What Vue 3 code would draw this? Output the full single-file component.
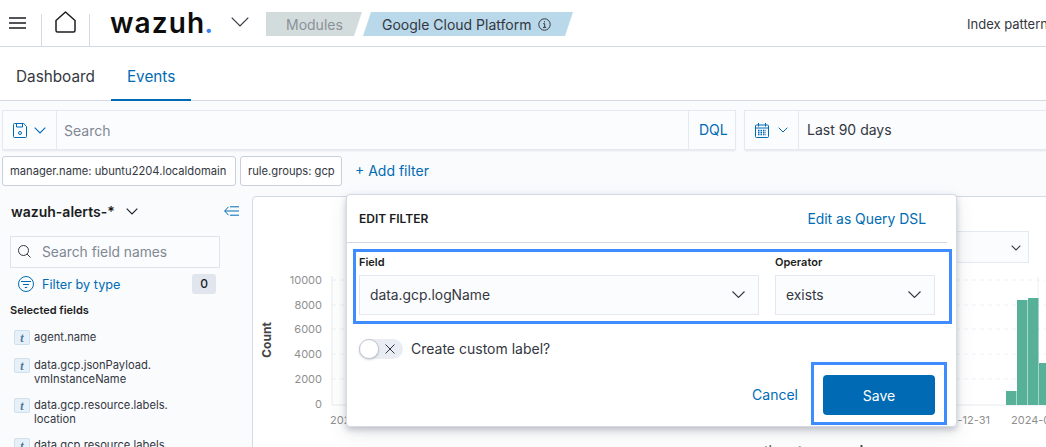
<template>
  <div class="page">
    <header class="topbar">
      <div class="menu-btn">
        <svg width="17" height="12" viewBox="0 0 17 12"><path d="M0 1h17M0 6h17M0 11h17" stroke="#1a1c21" stroke-width="1.7" /></svg>
      </div>
      <div class="home-btn">
        <svg width="21" height="22" viewBox="0 0 21 22" fill="none"><path d="M1 9.5 10.5 1 20 9.5V19.5a1.5 1.5 0 0 1-1.5 1.5h-16A1.5 1.5 0 0 1 1 19.500Z" stroke="#1a1c21" stroke-width="1.5" stroke-linejoin="round" /></svg>
      </div>
      <div class="logo">wazuh<span class="logo-dot">.</span></div>
      <svg class="logo-chevron" width="18" height="10" viewBox="0 0 18 10" fill="none"><path d="M.7.7 9 9l8.300-8.300" stroke="#343741" stroke-width="1.200" /></svg>
      <div class="crumb crumb-grey"><span>Modules</span></div>
      <div class="crumb crumb-blue">
        <span>Google Cloud Platform</span>
        <svg width="13" height="13" viewBox="0 0 13 13" fill="none"><circle cx="6.500" cy="6.500" r="5.700" stroke="#343741" /><path d="M5.200 5.700h1.500v3.500M5 9.400h3.200M6.500 3.200v1.200" stroke="#343741" /></svg>
      </div>
      <div class="index-pattern">Index pattern</div>
    </header>

    <nav class="tabs">
      <div class="tab">Dashboard</div>
      <div class="tab active">Events</div>
    </nav>

    <section class="query-row">
      <div class="search-bar">
        <div class="save-cell">
          <svg width="14" height="15" viewBox="0 0 14 15" fill="none" stroke="#006bb4"><path d="M.5 1.500a1 1 0 0 1 1-1h9.200l2.800 2.800v10.200a1 1 0 0 1-1 1h-11a1 1 0 0 1-1-1Z" /><path d="M3.500.5v3.500h6V.5" /><circle cx="7" cy="10" r="1.500" /></svg>
          <svg width="12" height="7" viewBox="0 0 12 7" fill="none"><path d="M.7.7 6 6l5.300-5.300" stroke="#006bb4" stroke-width="1.100" /></svg>
        </div>
        <div class="search-text">Search</div>
        <div class="dql">DQL</div>
      </div>
      <div class="date-bar">
        <div class="date-cell">
          <svg width="14" height="15" viewBox="0 0 14 15" fill="none" stroke="#006bb4"><rect x=".5" y="2" width="13" height="12.500" rx="1" /><path d="M3.500 0v3.500M10.500 0v3.500M.5 5h13" /><path d="M3 7.500h8M3 9.500h8M3 11.500h8" stroke-dasharray="1.500 1" stroke-width="1.300" /></svg>
          <svg width="10" height="6" viewBox="0 0 10 6" fill="none"><path d="M.7.7 5 5 9.300.7" stroke="#006bb4" /></svg>
        </div>
        <div class="date-text">Last 90 days</div>
      </div>
    </section>

    <section class="filter-row">
      <div class="pill pill-wide">manager.name: ubuntu2204.localdomain</div>
      <div class="pill pill-narrow">rule.groups: gcp</div>
      <div class="add-filter">+ Add filter</div>
    </section>

    <main class="content">
      <aside class="sidebar">
        <div class="index-row">
          <span class="index-name">wazuh-alerts-*</span>
          <svg width="12" height="7" viewBox="0 0 12 7" fill="none"><path d="M.7.7 6 6l5.300-5.300" stroke="#1a1c21" stroke-width="1.100" /></svg>
          <svg class="collapse" width="15" height="10" viewBox="0 0 15 10" fill="none" stroke="#006bb4"><path d="M4.500.8.700 5l3.800 4.200M.7 5H15M6 .8h9M6 9.200h9" /></svg>
        </div>
        <div class="field-search">
          <svg width="13" height="13" viewBox="0 0 13 13" fill="none" stroke="#343741"><circle cx="5.500" cy="5.500" r="5" /><path d="m9 9 3.500 3.500" /></svg>
          <span>Search field names</span>
        </div>
        <div class="type-row">
          <svg width="16" height="16" viewBox="0 0 16 16" fill="none" stroke="#006bb4"><circle cx="8" cy="8" r="7.500" /><path d="M3 5.500h10M5 8.500h6M6.800 11.500h2.400" /></svg>
          <span class="type-label">Filter by type</span>
          <span class="badge">0</span>
        </div>
        <div class="selected-title">Selected fields</div>
        <div class="field-list">
          <div v-for="f in fields" :key="f.join()" class="field-row">
            <span class="field-type">t</span>
            <span class="field-name"><span v-for="line in f" :key="line" class="field-line">{{ line }}</span></span>
          </div>
        </div>
      </aside>

      <div class="chart-panel">
        <svg class="chart" width="794" height="251" viewBox="252 196 794 251">
          <g stroke="#eef0f3" stroke-dasharray="4 4">
            <path d="M332 280H1046M332 305H1046M332 329H1046M332 354H1046M332 379H1046" />
          </g>
          <path d="M332 276V405H1046" fill="none" stroke="#e8eaee" />
          <path d="M1038 276V405" stroke="#eef0f3" />
          <g fill="#8f8f8f" font-size="11" text-anchor="end">
            <text x="322" y="284">10000</text>
            <text x="322" y="309">8000</text>
            <text x="322" y="333">6000</text>
            <text x="322" y="358">4000</text>
            <text x="322" y="383">2000</text>
            <text x="322" y="408">0</text>
          </g>
          <text class="count" transform="translate(271 340) rotate(-90)" text-anchor="middle">Count</text>
          <text x="330" y="424" fill="#8f8f8f" font-size="11">2023</text>
          <text x="990" y="424" fill="#8f8f8f" font-size="11" text-anchor="end">2023-12-31</text>
          <text x="1011" y="424" fill="#8f8f8f" font-size="11">2024-01</text>
          <g fill="#57b199">
            <rect x="1006" y="391" width="10.500" height="14" />
            <rect x="1017" y="300" width="10.500" height="105" />
            <rect x="1028" y="298" width="10.500" height="107" />
            <rect x="1039" y="363" width="10.500" height="42" />
          </g>
          <text x="764" y="455" class="axis-title">timestamp per day</text>
        </svg>
        <div class="interval-select">
          <svg width="10" height="6" viewBox="0 0 10 6" fill="none"><path d="M.7.7 5 5 9.300.7" stroke="#343741" stroke-width="1.100" /></svg>
        </div>
      </div>
    </main>

    <div class="popover">
      <div class="pop-head">
        <span class="pop-title">EDIT FILTER</span>
        <span class="pop-link">Edit as Query DSL</span>
      </div>
      <div class="pop-body">
        <div class="form-grid">
          <div class="form-col field-col">
            <label>Field</label>
            <div class="select">
              <span>data.gcp.logName</span>
              <svg width="13" height="7" viewBox="0 0 13 7" fill="none"><path d="M.5.500 6.500 6.500 12.500.5" stroke="#343741" stroke-width="1.100" /></svg>
            </div>
          </div>
          <div class="form-col op-col">
            <label>Operator</label>
            <div class="select">
              <span>exists</span>
              <svg width="13" height="7" viewBox="0 0 13 7" fill="none"><path d="M.5.500 6.500 6.500 12.500.5" stroke="#343741" stroke-width="1.100" /></svg>
            </div>
          </div>
        </div>
        <div class="switch-row">
          <div class="switch">
            <span class="knob"></span>
            <svg width="10" height="10" viewBox="0 0 10 10" fill="none"><path d="m.5.500 9 9M9.500.5l-9 9" stroke="#343741" /></svg>
          </div>
          <span class="switch-label">Create custom label?</span>
        </div>
        <div class="actions">
          <span class="cancel">Cancel</span>
          <button class="save">Save</button>
        </div>
      </div>
      <div class="mark mark-form"></div>
      <div class="mark mark-save"></div>
    </div>
  </div>
</template>

<script setup>
const fields = [
  ["agent.name"],
  ["data.gcp.jsonPayload.", "vmInstanceName"],
  ["data.gcp.resource.labels.", "location"],
  ["data.gcp.resource.labels."],
]
</script>

<style>
html,
body {
  margin: 0;
  overflow: hidden;
}
</style>

<style scoped>
.page {
  position: relative;
  width: 1046px;
  height: 447px;
  overflow: hidden;
  background: #fafbfd;
  font-family: Inter, "Liberation Sans", sans-serif;
  color: #343741;
}
.topbar {
  display: flex;
  align-items: flex-start;
  height: 46px;
  background: #fff;
  border-bottom: 1px solid #d3dae6;
  white-space: nowrap;
}
.menu-btn {
  width: 41px;
  height: 46px;
  padding: 17px 0 0 9px;
  box-sizing: border-box;
}
.menu-btn svg {
  display: block;
}
.home-btn {
  width: 49px;
  height: 32px;
  margin-top: 14px;
  padding: 0 0 0 13px;
  box-sizing: border-box;
  border-left: 1px solid #d3dae6;
  border-right: 1px solid #d3dae6;
}
.home-btn svg {
  display: block;
  margin-top: -3px;
}
.logo {
  margin-left: 20px;
  width: 121px;
  font-size: 28px;
  font-weight: 600;
  line-height: 46px;
  height: 46px;
  letter-spacing: 1.1px;
  color: #0d0d0d;
}
.logo-dot {
  color: #3d82f1;
  margin-left: -1px;
}
.logo-chevron {
  margin-top: 17px;
}
.crumb {
  height: 24px;
  margin-top: 12px;
  display: flex;
  align-items: center;
  font-size: 14px;
  box-sizing: border-box;
}
.crumb-grey {
  margin-left: 17px;
  width: 96px;
  padding-left: 20px;
  color: #8a9199;
  background: #d3dcdc;
  clip-path: polygon(0 0, 100% 0, calc(100% - 8px) 100%, 0 100%);
}
.crumb-blue {
  margin-left: 1px;
  width: 210px;
  padding-left: 19px;
  gap: 7px;
  color: #343741;
  background: #b9d8ea;
  clip-path: polygon(8px 0, 100% 0, calc(100% - 8px) 100%, 0 100%);
}
.index-pattern {
  margin-left: auto;
  margin-right: -5px;
  margin-top: 16px;
  font-size: 13px;
  line-height: 17px;
  width: 84px;
}
.tabs {
  display: flex;
  height: 53px;
  background: #fff;
  border-bottom: 1px solid #d3dae6;
}
.tab {
  font-size: 15.3px;
  line-height: 59px;
  height: 53px;
  padding: 0 16px;
  box-sizing: border-box;
}
.tab.active {
  color: #006bb4;
  border-bottom: 2px solid #006bb4;
  height: 54px;
}
.query-row {
  display: flex;
  gap: 8px;
  margin-top: 9px;
  padding-left: 2px;
  width: 1100px;
}
.search-bar,
.date-bar {
  display: flex;
  align-items: center;
  height: 40px;
  box-sizing: border-box;
  border: 1px solid #e4e8f0;
  box-shadow: 0 2px 2px -1px rgba(152, 162, 179, 0.25);
  background: #fbfcfd;
  font-size: 14px;
}
.search-bar {
  width: 734px;
}
.date-bar {
  width: 340px;
}
.save-cell,
.date-cell {
  display: flex;
  align-items: center;
  width: 54px;
  height: 38px;
  padding-left: 10px;
  box-sizing: border-box;
  border-right: 1px solid #e4e8f0;
}
.save-cell {
  gap: 7px;
}
.date-cell {
  gap: 9px;
}
.search-text {
  flex: 1;
  padding-left: 7px;
  color: #7f8894;
}
.dql {
  width: 47px;
  height: 38px;
  line-height: 37px;
  padding-left: 10px;
  box-sizing: border-box;
  border-left: 1px solid #e4e8f0;
  color: #006bb4;
}
.date-text {
  padding: 0 0 2px 8px;
}
.filter-row {
  display: flex;
  align-items: center;
  gap: 4px;
  margin-top: 6px;
  padding-left: 2px;
  height: 30px;
}
.pill {
  height: 30px;
  line-height: 29px;
  padding: 0 7px;
  box-sizing: border-box;
  font-size: 11.2px;
  white-space: nowrap;
  background: #fff;
  border: 1px solid #c9d0dc;
  border-radius: 3px;
}
.pill-wide {
  width: 234px;
}
.pill-narrow {
  width: 102px;
}
.add-filter {
  margin-left: 9px;
  padding-bottom: 2px;
  font-size: 14px;
  color: #006bb4;
}
.content {
  display: flex;
  margin-top: 10px;
}
.sidebar {
  width: 252px;
  flex: none;
  padding: 0 0 0 10px;
  box-sizing: border-box;
}
.index-row {
  display: flex;
  align-items: center;
  gap: 11px;
  width: 229px;
  height: 30px;
  padding-left: 1px;
  box-sizing: border-box;
}
.index-name {
  font-size: 14px;
  font-weight: 600;
  color: #1a1c21;
  white-space: nowrap;
}
.collapse {
  margin-left: auto;
}
.field-search {
  display: flex;
  align-items: center;
  gap: 11px;
  width: 210px;
  height: 32px;
  margin-top: 10px;
  padding: 0 0 1px 7px;
  box-sizing: border-box;
  border: 1px solid #dfe3ea;
  background: #fbfcfd;
  font-size: 13.800px;
  color: #7f8894;
}
.type-row {
  display: flex;
  align-items: center;
  gap: 8px;
  width: 206px;
  height: 20px;
  margin-top: 6px;
  padding-left: 8px;
  box-sizing: border-box;
}
.type-label {
  flex: 1;
  font-size: 12.700px;
  color: #006bb4;
}
.badge {
  width: 24px;
  height: 20px;
  line-height: 20px;
  text-align: center;
  font-size: 12px;
  font-weight: 500;
  color: #1a1c21;
  background: #e0e5ee;
  border-radius: 3px;
}
.selected-title {
  margin-top: 9px;
  font-size: 11px;
  line-height: 14px;
  font-weight: 600;
  color: #1a1c21;
}
.field-list {
  display: flex;
  flex-direction: column;
  gap: 12px;
  margin-top: 13px;
}
.field-row {
  display: flex;
  gap: 4px;
  padding-left: 4px;
  font-size: 11.2px;
  line-height: 14px;
}
.field-row:first-child {
  height: 16px;
}
.field-type {
  width: 16px;
  height: 15px;
  line-height: 15px;
  text-align: center;
  flex: none;
  box-sizing: border-box;
  font-family: "Liberation Serif", serif;
  font-style: italic;
  font-weight: 700;
  font-size: 12px;
  color: #4f7596;
  background: #e6f0f8;
  border: 1px solid #cfe0ee;
  border-radius: 2px;
}
.field-name {
  display: flex;
  flex-direction: column;
}
.chart-panel {
  position: relative;
  flex: none;
  width: 800px;
  height: 300px;
  box-sizing: border-box;
  background: #fff;
  border: 1px solid #d3dae6;
  border-radius: 4px 0 0 0;
}
.chart {
  display: block;
  margin: -1px 0 0 -1px;
  font-family: Inter, "Liberation Sans", sans-serif;
}
.count {
  font-size: 12px;
  font-weight: 700;
  fill: #444;
}
.axis-title {
  font-size: 12.500px;
  font-weight: 700;
  fill: #444;
}
.interval-select {
  position: absolute;
  left: 700px;
  top: 34px;
  width: 76px;
  height: 32px;
  box-sizing: border-box;
  padding: 13px 0 0 57px;
  border: 1px solid #e4e8f0;
  background: #fbfcfd;
}
.interval-select svg {
  display: block;
}
.popover {
  position: absolute;
  left: 346px;
  top: 194px;
  width: 611px;
  height: 233px;
  box-sizing: border-box;
  background: #fff;
  border: 1px solid #d3dae6;
  border-radius: 4px;
  box-shadow: 0 3px 6px rgba(60, 70, 90, 0.28), 0 8px 20px rgba(60, 70, 90, 0.1);
}
.pop-head {
  display: flex;
  justify-content: space-between;
  align-items: center;
  width: 600px;
  height: 48px;
  box-sizing: border-box;
  padding: 0 21px 0 12px;
  border-bottom: 1px solid #d3dae6;
}
.pop-title {
  font-size: 12px;
  font-weight: 600;
  color: #1a1c21;
}
.pop-link {
  font-size: 13.900px;
  color: #006bb4;
}
.pop-body {
  padding: 12px 21px 0 12px;
}
.form-grid {
  display: flex;
  gap: 16px;
}
.form-col label {
  display: block;
  height: 20px;
  font-size: 11px;
  line-height: 14px;
  font-weight: 600;
  color: #1a1c21;
}
.field-col {
  width: 400px;
}
.op-col {
  width: 160px;
}
.select {
  display: flex;
  align-items: center;
  justify-content: space-between;
  height: 40px;
  padding: 0 13px 1px 10px;
  box-sizing: border-box;
  border: 1px solid #e4e8f0;
  background: #fbfcfd;
  font-size: 13.850px;
}
.switch-row {
  display: flex;
  align-items: center;
  gap: 8px;
  margin-top: 24px;
  height: 20px;
  font-size: 14px;
}
.switch-label {
  padding-bottom: 2px;
}
.switch {
  position: relative;
  display: flex;
  align-items: center;
  justify-content: flex-end;
  width: 44px;
  height: 20px;
  padding-right: 8px;
  box-sizing: border-box;
  background: #e9edf3;
  border-radius: 10px;
}
.knob {
  position: absolute;
  left: 0;
  top: 0;
  width: 20px;
  height: 20px;
  box-sizing: border-box;
  background: #fff;
  border: 1px solid #c2c8d2;
  border-radius: 50%;
  box-shadow: 0 1px 2px rgba(60, 70, 90, 0.25);
}
.actions {
  display: flex;
  align-items: center;
  justify-content: flex-end;
  gap: 25px;
  margin-top: 16px;
}
.cancel {
  padding-bottom: 2px;
  font-size: 14px;
  color: #006bb4;
}
.save {
  width: 112px;
  height: 40px;
  border: 0;
  border-radius: 4px;
  background: #006bb4;
  color: #fff;
  font-family: inherit;
  font-size: 14px;
}
.mark {
  position: absolute;
  box-sizing: border-box;
  border: 3px solid #3f8cff;
  pointer-events: none;
}
.mark-form {
  left: 6px;
  top: 54px;
  width: 599px;
  height: 75px;
}
.mark-save {
  left: 464px;
  top: 167px;
  width: 136px;
  height: 63px;
}
</style>
